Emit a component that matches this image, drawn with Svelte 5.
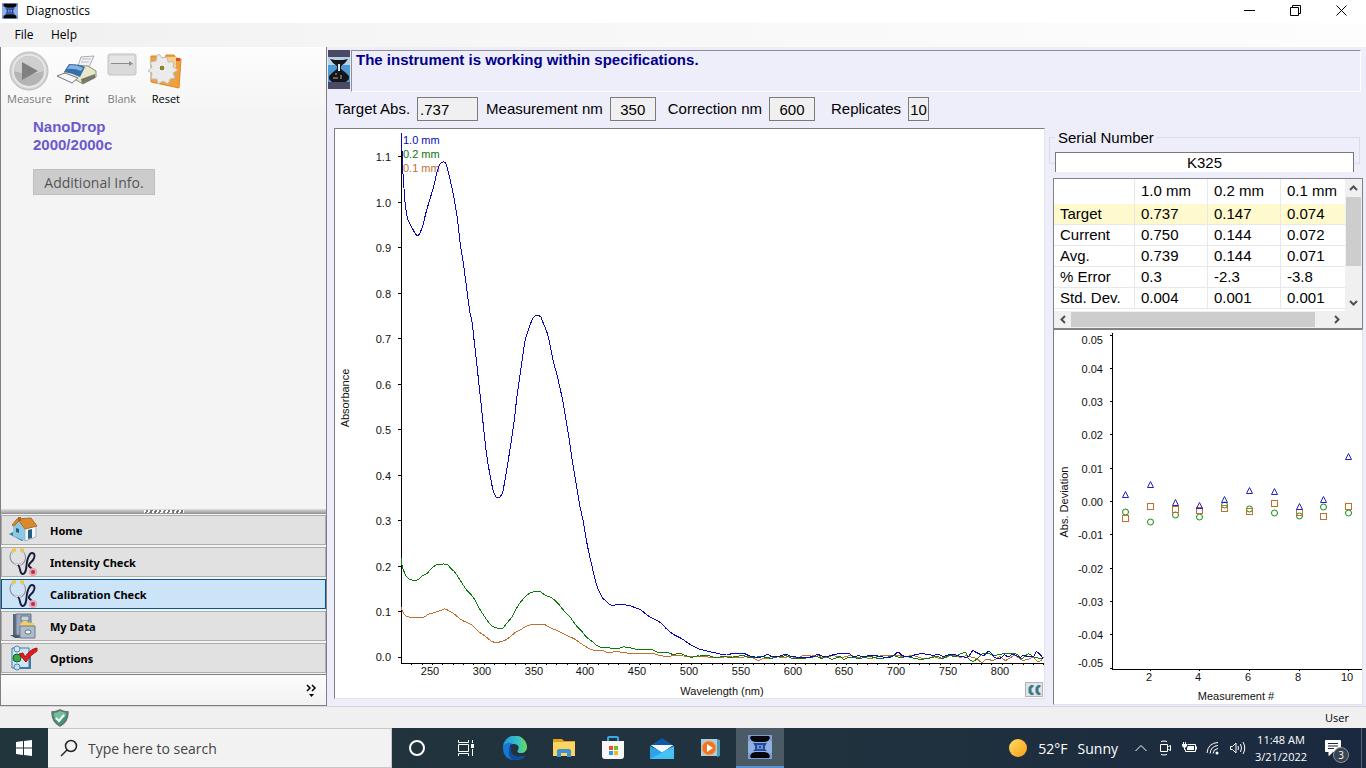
<script lang="ts">
  type Point = [number, number];
  type View = "home" | "intensity" | "calibration" | "data" | "options";

  const navItems: { view: View; label: string }[] = [
    { view: "home", label: "Home" },
    { view: "intensity", label: "Intensity Check" },
    { view: "calibration", label: "Calibration Check" },
    { view: "data", label: "My Data" },
    { view: "options", label: "Options" },
  ];

  let activeView = $state<View>("calibration");
  let serial = $state("K325");
  let search = $state("");

  const columns = ["1.0 mm", "0.2 mm", "0.1 mm"];
  const rows = [
    { label: "Target", values: ["0.737", "0.147", "0.074"] },
    { label: "Current", values: ["0.750", "0.144", "0.072"] },
    { label: "Avg.", values: ["0.739", "0.144", "0.071"] },
    { label: "% Error", values: ["0.3", "-2.3", "-3.8"] },
    { label: "Std. Dev.", values: ["0.004", "0.001", "0.001"] },
  ];

  // peaks covers 222-510 nm, tail the noisy stretch after it
  const traces: { name: string; color: string; peaks: Point[]; tail: Point[] }[] = [
    {
      name: "1.0 mm",
      color: "#0a0ab4",
      peaks: [
        [215, -800], [217, -710], [221, -650], [225, -595], [232, -548], [240, -527], [247, -515], [255, -500],
        [261, -494], [268, -497], [278, -523], [290, -570], [300, -603], [312, -645], [322, -688], [330, -707],
        [336, -713], [345, -713], [350, -702], [360, -663], [372, -605], [382, -545], [390, -475], [400, -410],
        [410, -335], [420, -260], [426, -235], [435, -155], [445, -65], [452, 0], [462, 95], [470, 165],
        [480, 225], [489, 270], [497, 289], [503, 293], [511, 290], [518, 276], [525, 240], [535, 180],
        [545, 115], [553, 60], [560, -5], [565, -40], [575, -110], [586, -180], [600, -225], [610, -247],
        [617, -254], [625, -254], [633, -248], [640, -230], [652, -200], [660, -165], [670, -115], [680, -80],
        [690, -35], [698, 0], [708, 60], [718, 120], [728, 190], [740, 260], [750, 320], [760, 365],
        [772, 435], [785, 495], [800, 555], [815, 590], [828, 603], [840, 614], [850, 616], [870, 613],
        [900, 617], [915, 623], [930, 628], [945, 640], [960, 651], [990, 667], [1010, 687], [1030, 703],
        [1055, 716], [1080, 733], [1100, 743],
      ],
      tail: [
        [0, 58], [30, 65], [60, 72], [80, 75], [100, 70], [130, 70], [150, 78], [180, 82], [203, 73], [215, 80],
        [240, 78], [258, 73], [270, 78], [300, 82], [340, 80], [352, 73], [375, 80], [410, 72], [445, 70],
        [460, 80], [475, 77], [490, 80], [520, 75], [540, 80], [570, 82], [583, 75], [595, 66], [607, 77],
        [630, 80], [650, 73], [675, 72], [700, 76], [715, 73], [730, 79], [755, 72], [770, 76], [785, 80],
        [805, 80], [818, 62], [830, 68], [852, 76], [867, 64], [885, 83], [900, 85], [913, 75], [925, 80],
        [940, 73], [960, 82], [970, 77], [1000, 80], [1008, 66], [1020, 73], [1030, 88],
      ],
    },
    {
      name: "0.2 mm",
      color: "#0a780a",
      peaks: [
        [213, 475], [217, 500], [225, 522], [232, 533], [245, 540], [258, 541], [268, 537], [275, 528],
        [290, 521], [300, 510], [315, 497], [325, 493], [350, 493], [362, 505], [375, 517], [390, 540],
        [410, 570], [430, 592], [448, 625], [465, 652], [482, 675], [495, 682], [510, 686], [520, 683],
        [530, 670], [545, 652], [560, 624], [575, 602], [590, 586], [605, 577], [618, 574], [632, 576],
        [645, 585], [665, 594], [685, 611], [700, 630], [720, 651], [740, 678], [755, 694], [770, 712],
        [790, 727], [800, 736], [812, 742], [830, 743], [850, 745], [870, 744], [880, 741], [900, 743],
        [915, 747], [960, 748], [985, 757], [1010, 757], [1030, 764], [1040, 761], [1055, 762], [1068, 767],
        [1085, 772], [1100, 768],
      ],
      tail: [
        [0, 78], [20, 76], [45, 82], [70, 80], [90, 82], [110, 79], [130, 77], [150, 84], [180, 80], [200, 82],
        [215, 85], [235, 80], [260, 78], [280, 86], [310, 85], [325, 83], [350, 80], [365, 85], [380, 80],
        [395, 88], [420, 80], [430, 88], [450, 82], [480, 85], [510, 80], [540, 86], [560, 82], [580, 77],
        [600, 83], [620, 80], [640, 84], [660, 88], [680, 86], [710, 80], [730, 85], [750, 76], [765, 80],
        [780, 72], [797, 69], [805, 85], [820, 94], [835, 83], [850, 70], [870, 72], [885, 76], [905, 72],
        [920, 70], [950, 73], [965, 86], [985, 72], [1000, 80], [1015, 84], [1030, 84],
      ],
    },
    {
      name: "0.1 mm",
      color: "#c07030",
      peaks: [
        [213, 620], [218, 635], [226, 646], [240, 652], [280, 652], [295, 643], [315, 637], [335, 630],
        [345, 627], [358, 633], [370, 640], [395, 660], [425, 675], [445, 694], [465, 708], [485, 724],
        [500, 727], [520, 723], [535, 715], [555, 698], [575, 687], [590, 678], [605, 674], [640, 673],
        [660, 683], [685, 693], [710, 706], [735, 718], [755, 732], [775, 744], [790, 750], [815, 751],
        [835, 758], [855, 755], [885, 758], [905, 761], [965, 760], [985, 765], [1015, 770], [1030, 766],
        [1060, 768], [1100, 770],
      ],
      tail: [
        [0, 80], [20, 80], [40, 84], [60, 82], [90, 80], [110, 84], [140, 80], [160, 84], [175, 92], [190, 86],
        [215, 84], [230, 80], [250, 83], [270, 79], [290, 84], [310, 77], [335, 78], [350, 75], [370, 84],
        [400, 77], [420, 83], [440, 79], [455, 77], [470, 84], [490, 80], [510, 87], [530, 80], [550, 77],
        [580, 78], [595, 76], [610, 80], [640, 77], [660, 83], [680, 86], [700, 80], [720, 85], [740, 80],
        [760, 75], [780, 82], [800, 77], [815, 82], [830, 86], [845, 97], [860, 88], [880, 91], [900, 80],
        [915, 91], [930, 84], [945, 76], [965, 90], [985, 88], [1000, 82], [1010, 92], [1020, 94], [1030, 82],
      ],
    },
  ];

  // trace samples are stored at three units per plot unit; joined with a Catmull-Rom curve
  function tracePath(peaks: Point[], tail: Point[]) {
    const pts = [...peaks, ...tail.map(([x, y]): Point => [x + 1110, y + 690])].map(
      ([x, y]): Point => [x / 3 - 5, y / 3 + 271],
    );
    let d = `M${pts[0].map((v) => v.toFixed(1)).join(" ")}`;
    for (let i = 0; i < pts.length - 1; i++) {
      const p0 = pts[i - 1] ?? pts[i];
      const p1 = pts[i];
      const p2 = pts[i + 1];
      const p3 = pts[i + 2] ?? p2;
      const c = [
        p1[0] + (p2[0] - p0[0]) / 6,
        p1[1] + (p2[1] - p0[1]) / 6,
        p2[0] - (p3[0] - p1[0]) / 6,
        p2[1] - (p3[1] - p1[1]) / 6,
        ...p2,
      ];
      d += `C${c.map((v) => v.toFixed(1)).join(" ")}`;
    }
    return d;
  }

  const nmX = (nm: number) => Math.round(97 + (nm - 250) * 1.036);
  const absY = (a: number) => Math.round(529 - a * 455.5);
  const absTicks = Array.from({ length: 12 }, (_, i) => i / 10);
  const nmLabels = Array.from({ length: 12 }, (_, i) => 250 + i * 50);
  const nmTicks = Array.from({ length: 62 }, (_, i) => 230 + i * 10);

  const devX = (n: number) => Math.round(71 + (n - 1) * 24.8);
  const devY = (v: number) => Math.round(172 - v * 3330);
  const devTicks = Array.from({ length: 11 }, (_, i) => (5 - i) / 100);
  const deviations = {
    tri: [0.0021, 0.0051, -0.0003, -0.0011, 0.0006, 0.0033, 0.003, -0.0015, 0.0006, 0.0135],
    circle: [-0.003, -0.006, -0.0039, -0.0045, -0.0009, -0.0021, -0.0033, -0.0042, -0.0015, -0.0033],
    square: [-0.0051, -0.0015, -0.0024, -0.0027, -0.0021, -0.003, -0.0006, -0.0034, -0.0045, -0.0015],
  };
</script>

{#snippet deviceIcon(size: number)}
  <svg width={size} height={size} viewBox="0 0 24 24" aria-hidden="true">
    <rect width="24" height="24" fill="#7f9bd6" />
    <path d="M0 6h24v12H0z" fill="#8fb0e0" />
    <path d="M3 1h18l1 2-2 3-3 1H7L4 6 2 3zM7 17h10l3 1 2 3-1 2H3l-1-2 2-3z" fill="#05070d" />
    <path d="M5 8h14l-2 3v3l2 2H5l2-2v-3z" fill="#24489c" />
    <path d="M9 10h6v4H9z" fill="#6d92dc" />
    <path d="M11 11h2v2h-2z" fill="#24489c" />
  </svg>
{/snippet}

{#snippet stethoscope()}
  <svg width="30" height="28" viewBox="0 0 30 28" fill="none" aria-hidden="true">
    <path d="M5 3C0 9 3 15 10 17C18 16 19 8 14 3" stroke="#8e8e9c" stroke-width="2" />
    <path d="M5 3C1 9 4 15 10 17C17 16 18 8 14 3" stroke="#f4f4f8" />
    <path d="M4 2h4M12 2h4" stroke="#f0c63c" stroke-width="3" />
    <path d="M10 17C13 19 11 26 15 26C20 25 17 14 21 8C23 3 28 5 26 10C25 14 20 15 21 18C22 20 24 20 25 22" stroke="#1e1e3a" stroke-width="2" />
    <circle cx="25" cy="24" r="3" fill="#b92d4c" stroke="#e7a5b1" stroke-width="2" />
  </svg>
{/snippet}

<div class="app">
  <header class="titlebar">
    {@render deviceIcon(16)}
    <span class="title">Diagnostics</span>
    <button aria-label="Minimize"><svg width="11" height="11"><path d="M0 5.5h11" stroke="#000" /></svg></button>
    <button aria-label="Restore">
      <svg width="11" height="11" fill="none" stroke="#000"><path d="M.5 2.5h8v8h-8zM2.5 2V.5h8v8H9" /></svg>
    </button>
    <button aria-label="Close"><svg width="11" height="11"><path d="M.5.5l10 10M10.500.5l-10 10" stroke="#000" /></svg></button>
  </header>

  <nav class="menubar" aria-label="Menu">
    <button>File</button>
    <button>Help</button>
  </nav>

  <div class="body">
    <aside class="sidebar">
      <div class="toolbar">
        <button class="tool" disabled>
          <svg width="42" height="40" viewBox="0 0 42 40">
            <circle cx="21" cy="20" r="19" fill="#d2d2d2" stroke="#bcbcbc" />
            <circle cx="21" cy="20" r="16" fill="#b4b4b4" stroke="#e6e6e6" stroke-width="2" />
            <path d="M6 20a15 15 0 0 1 30 0q-14 6-30 0z" fill="#cfcfcf" />
            <path d="M14 11l16 9-16 9z" fill="#808080" />
          </svg>
          Measure
        </button>
        <button class="tool">
          <svg width="42" height="40" viewBox="0 0 42 40">
            <path d="M22 15l3-9 13-1-5 11z" fill="#f2f2f6" stroke="#a9a9b2" />
            <path d="M26 8h9M25 11h8" stroke="#bbb" />
            <path d="M8 22l5-8 19 1 8 5v6l-13 7z" fill="#e8e8c8" stroke="#8d8d75" />
            <path d="M8 21l5-8q11 0 16 3l-5 10q-8-4-16-5z" fill="#3570ad" />
            <path d="M11 18l3-4q8 0 13 3l-2 3q-7-3-14-2z" fill="#86b3dd" />
            <path d="M25 28l14-5v4l-13 6z" fill="#77776a" />
            <path d="M1 25l8-3 13 5-6 5z" fill="#f7f7fa" stroke="#77777f" />
          </svg>
          Print
        </button>
        <button class="tool" disabled>
          <svg width="30" height="40" viewBox="0 0 30 40">
            <rect x="1" y="3" width="28" height="21" rx="2" fill="#dadada" stroke="#c4c4c4" />
            <path d="M3 5h24v7H3z" fill="#e5e5e5" />
            <path d="M4 12.500h20" stroke="#8c8c8c" />
            <path d="M22 10l4 2.500-4 2.500z" fill="#8c8c8c" />
          </svg>
          Blank
        </button>
        <button class="tool">
          <svg width="38" height="40" viewBox="0 0 38 40">
            <path d="M4 5h8l2 2h4l1-3h8l2 3 5 1-2 29L4 31z" fill="#efa03c" stroke="#d98a24" />
            <path d="M20 6h9v10l-7 16-13-3z" fill="#f8cf8a" />
            <path d="M29 7h4v3h-4z" fill="#d9502c" />
            <path d="M12 3l3 4 5-1 1 5 6 0-1 5 5 3-5 3 2 5-5 1-2 5-5-3-5 3-1-5-6 0 1-6-4-2 4-4-2-5 6-1 1-5z" fill="#ebebeb" stroke="#bdbdbd" />
            <circle cx="15" cy="17" r="3" fill="#8d8434" stroke="#fff" />
          </svg>
          Reset
        </button>
      </div>

      <div class="device">
        <p>NanoDrop<br />2000/2000c</p>
        <button class="info">Additional Info.</button>
      </div>

      <div class="grip"><span></span></div>

      <nav class="nav-list" aria-label="Diagnostics">
        {#each navItems as item (item.view)}
          <button class="nav-item" class:active={activeView === item.view} onclick={() => (activeView = item.view)}>
            {#if item.view === "home"}
              <svg width="30" height="28" viewBox="0 0 30 28">
                <path d="M1 18l8-4 9 8-4 3z" fill="#2e7f9c" />
                <path d="M5 10l5-5 7 8v12L5 20z" fill="#8cc8e4" />
                <path d="M17 12l11-2v11l-11 4z" fill="#f2f7fa" stroke="#9db8c6" />
                <path d="M4 9l5-6 14-1 6 8-12 3-6-8-5 5z" fill="#d88a2d" stroke="#b06c20" />
                <path d="M20 14l4-1v9l-4 1zM8 12l3 1v4l-3-1z" fill="#23617e" />
                <path d="M10 1h3v4h-3z" fill="#a8662a" />
              </svg>
            {:else if item.view === "data"}
              <svg width="30" height="28" viewBox="0 0 30 28">
                <path d="M2 23h10l4 3H7z" fill="#4a5568" />
                <path d="M5 2h3v21H5z" fill="#59677c" />
                <path d="M8 2h15v21H8z" fill="#9aa9bd" stroke="#66758a" />
                <path d="M13 4h8v5h-8z" fill="#c9d4e0" stroke="#66758a" />
                <path d="M12 13l3-4h4l1 2h6v4H12z" fill="#f5d060" />
                <path d="M12 14h15v12H12z" fill="#b0bccb" stroke="#6d7b90" />
                <rect x="17" y="18" width="6" height="4" rx="2" fill="#e5ebf2" stroke="#66758a" />
              </svg>
            {:else if item.view === "options"}
              <svg width="30" height="28" viewBox="0 0 30 28">
                <path d="M4 4h17v20H4z" fill="#cfe5f3" stroke="#3f7ba6" />
                <path d="M22 10v14H9" fill="none" stroke="#3f7ba6" stroke-width="2" />
                <circle cx="9" cy="5" r="3" fill="#d5eaf5" stroke="#4b88b0" />
                <circle cx="9" cy="14" r="4" fill="#3da54a" stroke="#14602a" />
                <circle cx="9" cy="23" r="3" fill="#c2e1f2" stroke="#4b88b0" />
                <path d="M11 10l4-1 2 4q5-8 12-9v3q-7 4-11 11z" fill="#e01c1c" stroke="#b01010" />
              </svg>
            {:else}
              {@render stethoscope()}
            {/if}
            {item.label}
          </button>
        {/each}
      </nav>

      <div class="nav-footer">
        <button aria-label="Configure buttons">
          <svg width="11" height="13" viewBox="0 0 11 13" fill="none" stroke="#000" stroke-width="1.500">
            <path d="M1 1l3 3-3 3M6 1l3 3-3 3" /><path d="M3 10h5l-2.500 3z" fill="#000" stroke="none" />
          </svg>
        </button>
      </div>
    </aside>

    <main class="main">
      <div class="message">
        <svg width="22" height="39" viewBox="0 0 22 39" aria-hidden="true">
          <rect width="22" height="39" fill="#4a4a66" />
          <path d="M0 7h22v25H0z" fill="#4c9bd4" />
          <path d="M0 7h22v8H0z" fill="#b8d3e6" />
          <path d="M2 9l5 1h8l5-1-3 4-4 3v3l5 4 3 3v3l-3 3H4l-3-3v-3l3-3 5-4v-3l-4-3z" fill="#15151a" />
          <path d="M10 14h2v7h-2z" fill="#dfe6ea" />
          <path d="M5 28h5M13 25v4M8 23v2" stroke="#b8b294" />
        </svg>
        <p>The instrument is working within specifications.</p>
      </div>

      <div class="content">
        <section class="spectrum">
          <div class="params">
            <label for="target">Target Abs.</label>
            <input id="target" class="wide" value=".737" readonly />
            <label for="measurement">Measurement nm</label>
            <input id="measurement" value="350" readonly />
            <label for="correction">Correction nm</label>
            <input id="correction" value="600" readonly />
            <label for="replicates">Replicates</label>
            <input id="replicates" class="narrow" value="10" readonly />
          </div>

          <div class="plot">
            <svg viewBox="0 0 709 569" role="img" aria-label="Absorbance by wavelength">
              <g class="axis">
                <path d="M66.500 5V534.500H709" />
                {#each absTicks as a (a)}
                  <path d="M63 {absY(a) - 0.5}h3" />
                {/each}
                {#each nmTicks as nm (nm)}
                  <path d="M{nmX(nm) + 0.5} 534v2" />
                {/each}
              </g>
              {#each absTicks as a (a)}
                <text class="end" x="56" y={absY(a) + (a ? 4 : 3)}>{a.toFixed(1)}</text>
              {/each}
              {#each nmLabels as nm (nm)}
                <text class="mid" x={nmX(nm) - 2} y="546">{nm}</text>
              {/each}
              {#each traces as t, i (t.name)}
                <text x="68" y={15 + i * 14} style:fill={t.color}>{t.name}</text>
              {/each}
              {#each [...traces].reverse() as t (t.name)}
                <path class="trace" d={tracePath(t.peaks, t.tail)} stroke={t.color} />
              {/each}
              <text class="mid" x="387" y="566">Wavelength (nm)</text>
              <text class="mid" transform="translate(14 269) rotate(-90)">Absorbance</text>
            </svg>
            <button class="collapse" aria-label="Collapse panel">
              <svg width="14" height="10" viewBox="0 0 14 10" fill="none" stroke="#3f7888" stroke-width="3">
                <path d="M6 0L3 3v4l3 3M13 0l-3 3v4l3 3" />
              </svg>
            </button>
          </div>
        </section>

        <section class="results">
          <div class="serial">
            <label for="serial">Serial Number</label>
            <input id="serial" bind:value={serial} />
          </div>

          <div class="grid-box">
            <table>
              <thead>
                <tr>
                  <td></td>
                  {#each columns as c (c)}<th scope="col">{c}</th>{/each}
                </tr>
              </thead>
              <tbody>
                {#each rows as row, i (row.label)}
                  <tr class:highlight={i === 0}>
                    <th scope="row">{row.label}</th>
                    {#each row.values as value}<td>{value}</td>{/each}
                  </tr>
                {/each}
              </tbody>
            </table>
            <div class="vscroll">
              <button aria-label="Scroll up"><svg width="9" height="6"><path d="M1 5l3.500-3.500L8 5" /></svg></button>
              <span class="thumb"></span>
              <button aria-label="Scroll down"><svg width="9" height="6"><path d="M1 1l3.500 3.500L8 1" /></svg></button>
            </div>
            <div class="hscroll">
              <button aria-label="Scroll left"><svg width="6" height="9"><path d="M5 1L1.500 4.500 5 8" /></svg></button>
              <span class="thumb"></span>
              <button aria-label="Scroll right"><svg width="6" height="9"><path d="M1 1l3.500 3.500L1 8" /></svg></button>
            </div>
          </div>

          <div class="plot deviation">
            <svg viewBox="0 0 308 372" role="img" aria-label="Absorbance deviation by measurement">
              <g class="axis">
                <path d="M58.500 3V339.500H308" />
                {#each devTicks as v (v)}
                  <path d="M56 {devY(v) - 0.5}h3" />
                {/each}
                {#each [2, 4, 6, 8, 10] as n (n)}
                  <path d="M{devX(n) + 0.5} 339v2" />
                {/each}
              </g>
              {#each devTicks as v, i (v)}
                <text class="end" x="49" y={devY(v) + (i === 0 ? 8 : i === 10 ? -2 : 4)}>{v.toFixed(2)}</text>
              {/each}
              {#each [2, 4, 6, 8, 10] as n (n)}
                <text class="mid" x={devX(n) - 1} y="351">{n}</text>
              {/each}
              <g class="markers">
                {#each deviations.circle as v, i}
                  <circle cx={devX(i + 1) + 0.5} cy={devY(v)} r="3" stroke="#128a12" />
                {/each}
                {#each deviations.square as v, i}
                  <rect x={devX(i + 1) - 2.5} y={devY(v) - 3.5} width="6" height="6" stroke="#c0702c" />
                {/each}
                {#each deviations.tri as v, i}
                  <path d="M{devX(i + 1) + 0.5} {devY(v) - 3.5}l3 6h-6z" stroke="#2020c8" />
                {/each}
              </g>
              <text class="mid" x="182" y="370">Measurement #</text>
              <text class="mid" transform="translate(14 172) rotate(-90)">Abs. Deviation</text>
            </svg>
          </div>
        </section>
      </div>
    </main>
  </div>

  <footer class="statusbar">
    <svg width="18" height="18" viewBox="0 0 18 18" aria-label="Protected">
      <path d="M9 1q4 2 8 2 0 10-8 14Q1 13 1 3q4 0 8-2z" fill="#3e9a74" stroke="#68706c" stroke-width="1.500" />
      <path d="M9 2q3 1 6 2l-1 4-10 3Q3 8 3 4q3 0 6-2z" fill="#72bf9c" />
      <path d="M5 9l3 3 5-6" fill="none" stroke="#fff" stroke-width="2" />
    </svg>
    <span>User</span>
  </footer>

  <div class="taskbar">
    <button class="start" aria-label="Start">
      <svg width="16" height="16" viewBox="0 0 16 16" fill="#fff">
        <path d="M0 2l7-1v6.500H0zM8 1l8-1v7.500H8zM0 8.500h7V15l-7-1zM8 8.500h8V16l-8-1z" />
      </svg>
    </button>
    <label class="search">
      <svg width="18" height="18" viewBox="0 0 18 18" fill="none" stroke="#222" stroke-width="1.500">
        <circle cx="11" cy="7" r="5.500" /><path d="M7 11l-6 6" />
      </svg>
      <input bind:value={search} placeholder="Type here to search" aria-label="Search" />
    </label>
    <button class="task" aria-label="Cortana">
      <svg width="18" height="18"><circle cx="9" cy="9" r="7" fill="none" stroke="#fff" stroke-width="2" /></svg>
    </button>
    <button class="task" aria-label="Task view">
      <svg width="18" height="18" fill="none" stroke="#fff">
        <path d="M1.500 5.500h10v7h-10zM1.500 1v2.500h10V1M1.500 17v-2.500h10V17M15.500 1v3M15.500 10v7" />
        <path d="M14 5h3v4h-3z" fill="#fff" stroke="none" />
      </svg>
    </button>
    <button class="task" aria-label="Edge">
      <svg width="24" height="24" viewBox="0 0 24 24">
        <defs>
          <linearGradient id="edge-top" x1="0" x2="1"><stop offset="0" stop-color="#2395df" /><stop offset=".6" stop-color="#35c1c9" /><stop offset="1" stop-color="#6bdc54" /></linearGradient>
        </defs>
        <path d="M0 12A12 12 0 0 1 24 11c0 4-3 6-6 6-4 0-4-2-3-3 2-4-1-6-4-6-5 0-9 2-11 4z" fill="url(#edge-top)" />
        <path d="M0 12c0-4 5-6 9-5-3 2-4 9 1 13 4 3 9 2 12 0-4 6-22 7-22-8z" fill="#1478d4" />
        <path d="M9 10c-4 8 4 13 13 9-2 4-7 5-11 5-6-1-7-10-2-14z" fill="#0d4d9b" />
      </svg>
    </button>
    <button class="task" aria-label="File Explorer">
      <svg width="22" height="20" viewBox="0 0 22 20">
        <path d="M0 1h9l2 2h11v5H0z" fill="#e0a21c" />
        <path d="M0 4h22v14H0z" fill="#fcd462" />
        <path d="M4 19v-6q0-2 2-2h10q2 0 2 2v6h-4v-4H8v4z" fill="#3f93d2" />
      </svg>
    </button>
    <button class="task" aria-label="Microsoft Store">
      <svg width="24" height="24" viewBox="0 0 24 24">
        <path d="M7 6V2q0-1 1-1h8q1 0 1 1v4" fill="none" stroke="#35a8e6" stroke-width="2" />
        <path d="M1 5h22v15q0 3-3 3H4q-3 0-3-3z" fill="#f7f7f7" />
        <path d="M8 10h4v4H8z" fill="#e8502a" /><path d="M13 10h4v4h-4z" fill="#7db82c" />
        <path d="M8 15h4v4H8z" fill="#2b9be4" /><path d="M13 15h4v4h-4z" fill="#f4b51e" />
      </svg>
    </button>
    <button class="task" aria-label="Mail">
      <svg width="24" height="22" viewBox="0 0 24 22">
        <path d="M0 9l12-8 12 8z" fill="#1257a8" />
        <path d="M1 8h22l-11 8z" fill="#f6f9fc" />
        <path d="M0 9l12 6 12-6v13H0z" fill="#2ba3ea" />
        <path d="M1 8h22l-11 7z" fill="#f6f9fc" />
        <path d="M0 22l24-13v13z" fill="#46c1f4" />
      </svg>
    </button>
    <button class="task" aria-label="Media player">
      <svg width="22" height="20" viewBox="0 0 22 20">
        <path d="M1 1h16v17H1z" fill="#a9cfe4" /><path d="M17 1l3 1v16l-3 1z" fill="#4f9cb8" />
        <circle cx="9" cy="10" r="7" fill="#ee7322" stroke="#f7a663" /><path d="M7 6l6 4-6 4z" fill="#fff" />
      </svg>
    </button>
    <button class="task running" aria-label="NanoDrop">{@render deviceIcon(24)}</button>

    <div class="tray">
      <button class="weather">
        <svg width="20" height="20">
          <defs><linearGradient id="sun" x2="1" y2="1"><stop offset="0" stop-color="#ffe066" /><stop offset="1" stop-color="#fb9a12" /></linearGradient></defs>
          <circle cx="10" cy="10" r="9" fill="url(#sun)" stroke="none" />
        </svg>
        <span>52°F</span><span>Sunny</span>
      </button>
      <button aria-label="Show hidden icons"><svg width="14" height="14"><path d="M1.500 10L7 4.500l5.500 5.500" /></svg></button>
      <button aria-label="Meet now">
        <svg width="14" height="16"><path d="M2.500 4.500h7v7h-7zM9.500 6.500h1l2-1v5l-2-1h-1M3 1.500q3-1 6 0M3 14.500q3 1 6 0" /></svg>
      </button>
      <button aria-label="Battery">
        <svg width="17" height="16">
          <path d="M6.500 4.500h8v7h-10v-2M15.500 6.500v3" /><path d="M7 6h6v4H6V8z" fill="#fff" stroke="none" />
          <path d="M1 4h5v2L4 8H3L1 6z" fill="#fff" stroke="none" /><path d="M2.500 2v2M4.500 2v2M3.500 8v2" />
        </svg>
      </button>
      <button aria-label="Network">
        <svg width="14" height="14"><path d="M1 12Q2 2 12 1.500M4 12.500Q5 5 12 4.500M7 12.500Q7.500 8 12 7.500" /><circle cx="11" cy="12" r="1.500" fill="#fff" stroke="none" /></svg>
      </button>
      <button aria-label="Volume">
        <svg width="17" height="14"><path d="M1.500 5.500h2L7 2v10L3.500 8.500h-2zM9 5q1 2 0 4M11.500 3q2 4 0 8M14 1q3.500 6 0 12" /></svg>
      </button>
      <button class="clock"><time>11:48 AM</time><time>3/21/2022</time></button>
      <button class="notify" aria-label="3 notifications">
        <svg width="16" height="16"><path d="M.5.5h15v11H8l-4 4v-4H.5z" fill="#fff" /><path d="M3 3.500h10M3 6h10M3 8.500h6" stroke="#1c2b3c" /></svg>
        <span class="badge">3</span>
      </button>
    </div>
  </div>
</div>

<style>
  :global(body) {
    margin: 0;
  }

  .app {
    --ui: "Open Sans", "Noto Sans", sans-serif;
    --arial: "Liberation Sans", Arial, sans-serif;
    display: flex;
    flex-direction: column;
    min-height: 100vh;
    background: #eeeefa;
    color: #000;
    font-family: var(--ui);
    font-size: 12px;
  }

  .app :global(*) {
    box-sizing: border-box;
  }

  svg {
    display: block;
    flex-shrink: 0;
  }

  button {
    display: flex;
    align-items: center;
    justify-content: center;
    padding: 0;
    border: none;
    background: transparent;
    color: inherit;
    font: inherit;
  }

  input {
    min-width: 0;
    padding: 0;
    font: inherit;
    color: inherit;
    border-radius: 0;
    outline: none;
  }

  p {
    margin: 0;
  }

  .titlebar {
    display: flex;
    align-items: center;
    height: 23px;
    padding: 0 2px 2px;
    background: #fff;
  }

  .title {
    flex: 1;
    padding-left: 8px;
  }

  .titlebar button {
    width: 46px;
    height: 20px;
  }

  .menubar {
    display: flex;
    height: 24px;
    padding: 0 0 2px 6px;
    background: linear-gradient(90deg, #f0f0f0, #f6f6f6 30%, #fdfdfd);
  }

  .menubar button {
    width: 36px;
    margin-right: 4px;
  }

  .body {
    display: flex;
    flex: 1;
  }

  .sidebar {
    display: flex;
    flex-direction: column;
    width: 327px;
    border-left: 1px solid #808080;
    border-right: 1px solid #808080;
    background: #f4f4f5;
  }

  .toolbar {
    display: flex;
    align-items: flex-start;
    gap: 4px;
    height: 62px;
    padding: 4px 0 0 6px;
    background: linear-gradient(#fdfdfd, #f5f5f6);
  }

  .tool {
    flex-direction: column;
    min-width: 40px;
    font-size: 11px;
    line-height: 15px;
  }

  .tool:disabled {
    color: #7c7c7c;
  }

  .device {
    flex: 1;
    padding: 9px 32px;
  }

  .device p {
    margin-bottom: 15px;
    color: #6a5acd;
    font: bold 15px/18px var(--arial);
  }

  .info {
    width: 122px;
    height: 26px;
    border: 1px solid #bfbfbf;
    background: #ccc;
    color: #555;
    font-size: 14px;
  }

  .grip {
    display: flex;
    justify-content: center;
    align-items: center;
    height: 5px;
    background: linear-gradient(#e0e0e0, #8e8e8e);
  }

  .grip span {
    width: 40px;
    height: 3px;
    background: repeating-linear-gradient(115deg, #fff 0 2px, #777 2px 4px);
  }

  .nav-list {
    display: flex;
    flex-direction: column;
    gap: 2px;
    padding-top: 1px;
  }

  .nav-item {
    justify-content: flex-start;
    gap: 12px;
    height: 30px;
    padding-left: 6px;
    border: 1px solid #adadad;
    background: #e1e1e1;
    font: bold 11px "Noto Sans", sans-serif;
  }

  .nav-item.active {
    border-color: #00559b;
    background: #cce4f7;
  }

  .nav-footer {
    display: flex;
    justify-content: flex-end;
    height: 32px;
    margin-top: 1px;
    padding-right: 9px;
    border-top: 1px solid #808080;
    border-bottom: 1px solid #808080;
    background: linear-gradient(#fcfcfc, #f2f2f2);
  }

  .main {
    display: flex;
    flex: 1;
    flex-direction: column;
    min-width: 0;
  }

  .message {
    display: flex;
    align-items: flex-start;
    gap: 1px;
    padding: 3px 5px 0 1px;
  }

  .message p {
    flex: 1;
    height: 42px;
    padding: 0 4px;
    border: 1px solid #8e8e96;
    border-right-color: #fff;
    border-bottom-color: #fff;
    color: #00008b;
    font: bold 15px/18px var(--arial);
  }

  .content {
    display: flex;
    flex: 1;
    gap: 3px;
    padding: 0 3px 0 7px;
    font: 15px/18px var(--arial);
  }

  .spectrum {
    display: flex;
    flex: 1;
    flex-direction: column;
    min-width: 0;
    padding-bottom: 7px;
  }

  .params {
    display: flex;
    align-items: center;
    height: 36px;
    padding: 0 0 2px 1px;
  }

  .params label:last-of-type {
    margin-left: 4px;
  }

  .params input {
    width: 46px;
    height: 24px;
    margin: 0 12px 0 7px;
    border: 1px solid #7a7a7a;
    background: #f0f0f0;
    text-align: center;
  }

  .params .wide {
    width: 61px;
    margin-right: 8px;
    padding-left: 2px;
    text-align: left;
  }

  .params .narrow {
    width: 21px;
  }

  .plot {
    position: relative;
    flex: 1;
    border: 1px solid #7e7e84;
    border-right-color: #e2e2ea;
    border-bottom-color: #e2e2ea;
    background: #fff;
  }

  .plot > svg {
    width: 100%;
    height: auto;
  }

  .plot text {
    fill: #111;
    font: 11px var(--arial);
  }

  .end {
    text-anchor: end;
  }

  .mid {
    text-anchor: middle;
  }

  .axis path {
    fill: none;
    stroke: #000;
    shape-rendering: crispEdges;
  }

  .trace {
    fill: none;
    shape-rendering: crispEdges;
  }

  .markers {
    fill: none;
  }

  .collapse {
    position: absolute;
    right: 1px;
    bottom: 1px;
    width: 18px;
    height: 15px;
    border: 1px solid #b4b4b4;
    background: #dde5e8;
  }

  .results {
    display: flex;
    flex-direction: column;
    width: 315px;
    padding: 37px 0 1px 5px;
  }

  .serial {
    position: relative;
    height: 43px;
    padding: 23px 9px 0 2px;
  }

  .serial::before {
    content: "";
    position: absolute;
    inset: 8px 3px 8px -4px;
    border: 1px solid #dcdce4;
  }

  .serial label {
    position: absolute;
    top: 0;
    left: 2px;
    padding: 0 3px;
    background: #eeeefa;
  }

  .serial input {
    position: relative;
    width: 100%;
    height: 20px;
    border: 1px solid #7a7a7a;
    border-bottom: none;
    background: #fff;
    text-align: center;
  }

  .grid-box {
    display: grid;
    grid-template-rows: 132px 17px;
    grid-template-columns: 1fr 17px;
    height: 151px;
    margin-top: 6px;
    border: 1px solid #82828c;
    background: #fff;
  }

  table {
    align-self: start;
    width: 100%;
    border-collapse: separate;
    border-spacing: 0;
    table-layout: fixed;
  }

  th,
  td {
    width: 73px;
    height: 21px;
    padding: 0 0 0 6px;
    border-right: 1px solid #e8e8e8;
    border-bottom: 1px solid #e8e8e8;
    font-weight: normal;
    text-align: left;
    white-space: nowrap;
  }

  tr > :first-child {
    width: 81px;
  }

  tr > :last-child {
    width: auto;
    border-right: none;
  }

  thead th,
  thead td {
    height: 25px;
    border-bottom-color: #fff;
  }

  .highlight > * {
    background: #fffacd;
  }

  .vscroll,
  .hscroll {
    display: flex;
    background: #f0f0f0;
  }

  .vscroll {
    flex-direction: column;
    justify-content: space-between;
  }

  .vscroll button,
  .hscroll button {
    width: 17px;
    height: 17px;
  }

  .vscroll path,
  .hscroll path {
    fill: none;
    stroke: #505050;
    stroke-width: 2;
  }

  .thumb {
    background: #cdcdcd;
  }

  .vscroll .thumb {
    flex: 0 0 69px;
    margin: 0 1px 28px;
  }

  .hscroll {
    grid-column: 1 / -1;
    padding-right: 17px;
  }

  .hscroll .thumb {
    flex: 1;
    margin: 1px 13px 1px 0;
  }

  .statusbar {
    display: flex;
    align-items: center;
    justify-content: space-between;
    height: 22px;
    padding: 0 17px 0 51px;
    border-top: 1px solid #d7d7e0;
    background: #f0f0f0;
    font-size: 11px;
  }

  .taskbar {
    display: flex;
    height: 40px;
    background: linear-gradient(90deg, #21353d, #20323e 60%, #1b2940);
    color: #fff;
  }

  .start {
    width: 48px;
  }

  .search {
    display: flex;
    align-items: center;
    gap: 10px;
    width: 344px;
    margin-right: 1px;
    padding-left: 12px;
    border: 1px solid #c8c8c8;
    border-left: none;
    background: #f2f2f2;
  }

  .search input {
    flex: 1;
    border: none;
    background: transparent;
    color: #333;
    font-size: 14px;
  }

  .search input::placeholder {
    color: #444;
    opacity: 1;
  }

  .task {
    width: 48px;
    margin-right: 1px;
  }

  .running {
    border-bottom: 2px solid #5a93cf;
    background: #4a5b66;
  }

  .tray {
    display: flex;
    flex: 1;
    justify-content: flex-end;
    margin-right: 4px;
    border-right: 1px solid #55606e;
  }

  .tray button {
    width: 24px;
  }

  .tray svg {
    fill: none;
    stroke: #fff;
  }

  .tray .weather {
    gap: 10px;
    width: auto;
    margin-right: 11px;
    font-size: 14px;
  }

  .tray .clock {
    flex-direction: column;
    width: 64px;
    font-size: 11px;
    line-height: 17px;
  }

  .tray .notify {
    position: relative;
    width: 48px;
    padding-right: 8px;
  }

  .badge {
    position: absolute;
    top: 19px;
    left: 20px;
    width: 16px;
    height: 16px;
    border: 1px solid #8b929a;
    border-radius: 50%;
    background: #3a444e;
    font-size: 10px;
    line-height: 14px;
    text-align: center;
  }
</style>
